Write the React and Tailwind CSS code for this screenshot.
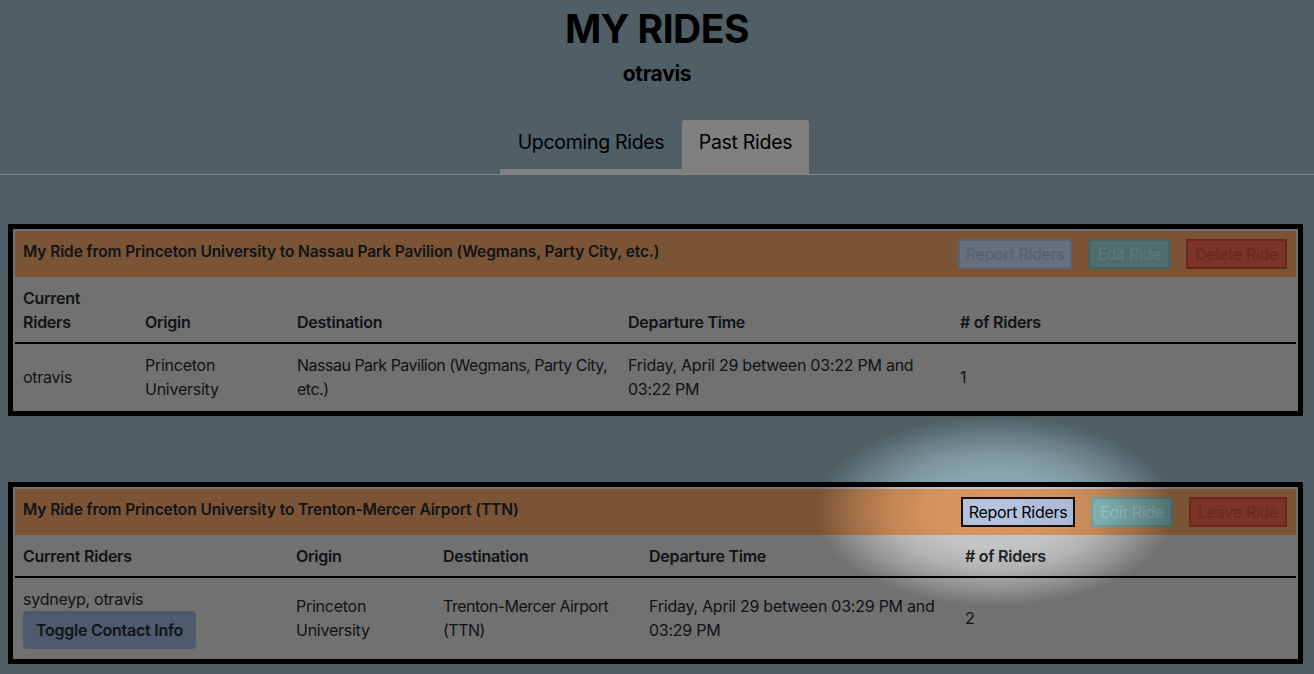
import React from 'react';

const pastRides = [
  {
    id: 1,
    title: 'My Ride from Princeton University to Nassau Park Pavilion (Wegmans, Party City, etc.)',
    riders: 'otravis',
    origin: 'Princeton University',
    destination: 'Nassau Park Pavilion (Wegmans, Party City, etc.)',
    time: 'Friday, April 29 between 03:22 PM and 03:22 PM',
    count: 1,
    owner: true,
    cols: ['w-[122px]', 'w-[152px]', 'w-[331px]', 'w-[332px]', ''],
  },
  {
    id: 2,
    title: 'My Ride from Princeton University to Trenton-Mercer Airport (TTN)',
    riders: 'sydneyp, otravis',
    origin: 'Princeton University',
    destination: 'Trenton-Mercer Airport (TTN)',
    time: 'Friday, April 29 between 03:29 PM and 03:29 PM',
    count: 2,
    owner: false,
    cols: ['w-[273px]', 'w-[147px]', 'w-[206px]', 'w-[316px]', ''],
  },
];

const RideCard = ({ ride }) => {
  return (
    <div className="ml-2 w-[1295px] border-[5px] border-black">
      <div className="border-2 border-[#cecece] bg-[#cecece]">
        <div className="h-[46px] bg-[#de9962] pl-2 pr-[9px] flex items-center justify-between">
          <h2 className="text-[15.5px] font-semibold tracking-[-0.1px] text-[#212529] -mt-[5px]">{ride.title}</h2>
          <div className="flex items-center gap-4 tracking-[-0.3px]">
            {ride.owner ? (
              <button disabled className="h-[30px] px-[6px] border-2 border-[#a6b5d8] bg-[#bccbeb] text-[#9cadd6] text-base">
                Report Riders
              </button>
            ) : (
              <button className="h-[30px] px-[6px] border-2 border-[#111] bg-[#b7c5e0] text-black text-base">
                Report Riders
              </button>
            )}
            <button disabled className="h-[30px] px-[7px] border-2 border-[#7ab4b6] bg-[#8ec6c8] text-[#b0dcdc] text-base">
              Edit Ride
            </button>
            <button disabled className="h-[30px] px-[7px] border-2 border-[#c0483a] bg-[#de6049] text-[#c04a3a] text-base">
              {ride.owner ? 'Delete Ride' : 'Leave Ride'}
            </button>
          </div>
        </div>
        <table className="w-full table-fixed text-left text-base leading-6 tracking-[-0.25px] text-[#212529]">
          <colgroup>
            {ride.cols.map((c, i) => (
              <col key={i} className={c} />
            ))}
          </colgroup>
          <thead>
            <tr className="border-b-2 border-black align-bottom">
              <th className="px-2 pt-[9px] pb-2 font-semibold">Current Riders</th>
              <th className="px-2 pt-[9px] pb-2 font-semibold">Origin</th>
              <th className="px-2 pt-[9px] pb-2 font-semibold">Destination</th>
              <th className="px-2 pt-[9px] pb-2 font-semibold">Departure Time</th>
              <th className="px-2 pt-[9px] pb-2 font-semibold"># of Riders</th>
            </tr>
          </thead>
          <tbody>
            <tr className="align-middle">
              <td className="px-2 pt-[9px] pb-2">
                <div>{ride.riders}</div>
                {!ride.owner && (
                  <button className="h-[38px] px-[13px] rounded-[4px] bg-[#90a4c8] font-semibold text-[#212529]">
                    Toggle Contact Info
                  </button>
                )}
              </td>
              <td className="px-2 pt-[9px] pb-2">{ride.origin}</td>
              <td className="px-2 pt-[9px] pb-2 tracking-[-0.5px]">{ride.destination}</td>
              <td className="px-2 pt-[9px] pb-2">{ride.time}</td>
              <td className="px-2 pt-[9px] pb-2">{ride.count}</td>
            </tr>
          </tbody>
        </table>
      </div>
    </div>
  );
};

export default function App() {
  return (
    <div className="relative min-h-screen w-full bg-[#90adb8] font-['Inter','Liberation_Sans',sans-serif] text-black">
      <div className="pt-[5px] text-center">
        <h1 className="text-[39px] leading-[48px] font-bold tracking-[-0.5px]">MY RIDES</h1>
        <h3 className="mt-[7px] text-[21px] leading-[28px] font-bold tracking-[-0.3px]">otravis</h3>
      </div>

      <div className="mt-8 flex justify-center pr-[5px] border-b border-[#f0f0f0]">
        <button className="w-[182px] pt-2 pb-[13px] border-b-[5px] border-[#e9e9e9] text-[19.5px] leading-[28px] tracking-[-0.3px]">
          Upcoming Rides
        </button>
        <button className="w-[127px] pt-2 pb-[18px] bg-[#e9e9e9] rounded-t-[3px] text-[19.5px] leading-[28px] tracking-[-0.3px]">
          Past Rides
        </button>
      </div>

      <div className="mt-[49px] flex flex-col gap-[66px] pb-6">
        {pastRides.map((ride) => (
          <RideCard key={ride.id} ride={ride} />
        ))}
      </div>

      {/* tutorial spotlight over the Report Riders button */}
      <div className="pointer-events-none fixed inset-0 bg-[radial-gradient(ellipse_180px_95px_at_995px_511px,rgba(0,0,0,0)_0%,rgba(0,0,0,0.05)_40%,rgba(0,0,0,0.13)_60%,rgba(0,0,0,0.28)_80%,rgba(0,0,0,0.45)_100%)]" />
    </div>
  );
}
